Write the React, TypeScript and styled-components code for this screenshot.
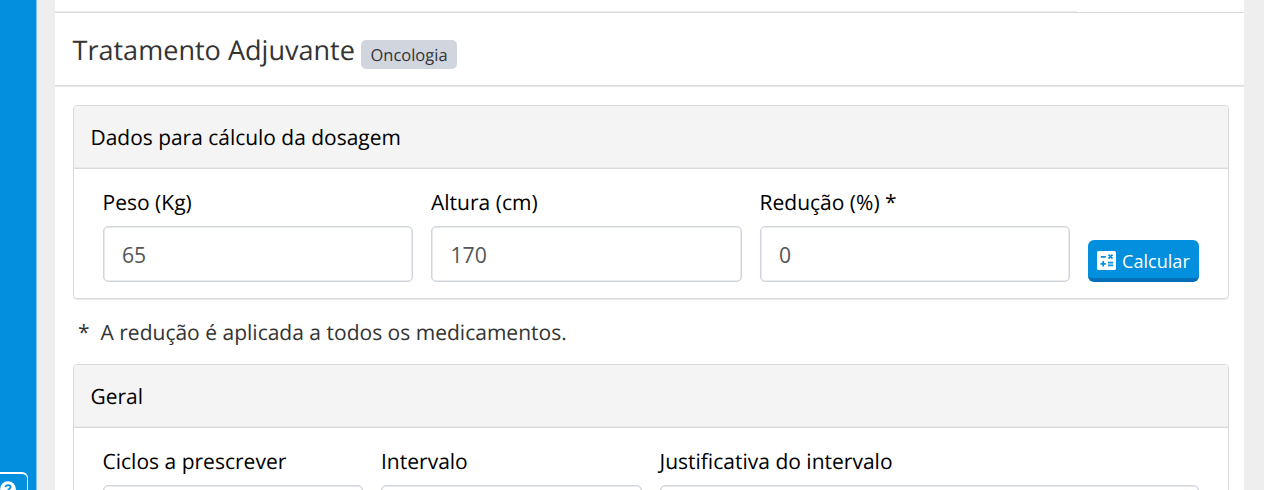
import React from "react";
import styled, { createGlobalStyle } from "styled-components";

const GlobalStyle = createGlobalStyle`
  * { box-sizing: border-box; }
  html, body { margin: 0; height: 490px; overflow: hidden; }
  body {
    background: #eeeeee;
    font-family: "Open Sans", "Noto Sans", sans-serif;
    font-size: 21.02px;
    font-weight: 370;
    color: #000;
    text-rendering: geometricPrecision;
    -webkit-font-smoothing: antialiased;
  }
`;

const Page = styled.div`
  display: flex;
  width: 1264px;
  height: 490px;
  overflow: hidden;
`;

const Sidebar = styled.aside`
  display: flex;
  align-items: flex-end;
  flex: none;
  width: 37px;
  background: #028fde;
  border-right: 1px solid #80c5ec;
`;

const HelpButton = styled.button`
  display: flex;
  justify-content: flex-start;
  width: 27.5px;
  height: 18px;
  padding: 7px 0 0;
  overflow: hidden;
  background: transparent;
  border: 1.5px solid #fff;
  border-width: 2px 1px 0 0;
  border-radius: 0 6px 0 0;
`;

const HelpIcon = styled.svg`
  display: block;
  flex: none;
  width: 16px;
  height: 16px;
`;

const Content = styled.main`
  flex: none;
  width: 1189px;
  height: 490px;
  margin-left: 18px;
  background: #fff;
  overflow: hidden;
`;

const PreviousSection = styled.div`
  height: 13px;
  padding-top: 11px;
  border-bottom: 1px solid #dadada;
`;

const PreviousEdge = styled.div`
  width: 1022px;
  height: 1px;
  background: #eeeeee;
`;

const TitleBar = styled.header`
  display: flex;
  align-items: flex-start;
  height: 73px;
  padding-left: 17.5px;
  border-bottom: 1px solid #dadada;
  box-shadow: 0 1px #eaeaea;
`;

const Title = styled.h1`
  margin: 17px 0 0;
  font-size: 27.05px;
  font-weight: 370;
  line-height: 39px;
  color: #343434;
  white-space: nowrap;
`;

const Badge = styled.span`
  height: 29px;
  margin: 27px 0 0 6px;
  padding: 0 9.5px;
  border-radius: 5px;
  background: #d1d5de;
  color: #343434;
  font-size: 16.5px;
  line-height: 30px;
`;

const Card = styled.section`
  width: 1156px;
  height: 194px;
  margin-left: 18px;
  border: 1px solid #dadada;
  border-radius: 4px;
  box-shadow: 0 1px #eaeaea;
  overflow: hidden;
`;

const CardHeader = styled.h2`
  height: 63px;
  margin: 0;
  padding-left: 16.5px;
  border-bottom: 1px solid #dadada;
  background: #f4f4f4;
  box-shadow: inset 0 -1px #eaeaea;
  font-size: 20.95px;
  font-weight: 370;
  line-height: 64px;
`;

const FieldRow = styled.div`
  display: flex;
  align-items: flex-end;
  gap: 18px;
  height: 113px;
  padding: 0 28.5px;
`;

const Field = styled.label<{ $width: number }>`
  display: flex;
  flex-direction: column;
  flex: none;
  width: ${(p) => p.$width}px;
`;

const FieldLabel = styled.span`
  height: 37px;
  line-height: 28px;
  white-space: nowrap;
`;

const Input = styled.input`
  width: 100%;
  height: 56px;
  padding: 0 18.5px;
  border: 1px solid #d1d5de;
  box-shadow: inset 0 0 0 0.5px #d1d5de;
  border-radius: 5px;
  background: #fff;
  color: #555;
  font: inherit;
  font-size: 21.2px;
  outline: none;
`;

const CalculateButton = styled.button`
  display: flex;
  align-items: center;
  gap: 6px;
  flex: none;
  width: 111px;
  height: 42px;
  margin-bottom: 0.4px;
  padding: 0 0 0 9px;
  border: 0;
  border-bottom: 4px solid #0270b8;
  border-radius: 6px;
  background: #028fde;
  color: #fff;
  font: inherit;
  font-size: 18.1px;
`;

const CalculatorIcon = styled.svg`
  display: block;
  flex: none;
  width: 19px;
  height: 19px;
  margin-top: 4px;
`;

const ButtonText = styled.span`
  padding-top: 4px;
`;

const Note = styled.p`
  height: 65px;
  margin: 0;
  padding-left: 23px;
  color: #343434;
  line-height: 68px;
  white-space: pre;
`;

const Gap = styled.div`
  height: 19px;
`;

export default function App() {
  return (
    <Page>
      <GlobalStyle />
      <Sidebar>
        <HelpButton aria-label="Ajuda">
          <HelpIcon viewBox="0 0 16 16">
            <circle cx="8" cy="8" r="7.8" fill="#fff" />
            <path d="M5.4 6.2Q5.8 4.1 8.1 4.1Q10.6 4.2 10.6 6Q10.6 7 9.4 7.7Q8.1 8.4 8.1 9.4" fill="none" stroke="#028fde" strokeWidth="1.8" />
            <circle cx="8.1" cy="11.8" r="1.1" fill="#028fde" />
          </HelpIcon>
        </HelpButton>
      </Sidebar>
      <Content>
        <PreviousSection>
          <PreviousEdge />
        </PreviousSection>
        <TitleBar>
          <Title>Tratamento Adjuvante</Title>
          <Badge>Oncologia</Badge>
        </TitleBar>
        <Gap />
        <Card>
          <CardHeader>Dados para cálculo da dosagem</CardHeader>
          <FieldRow>
            <Field $width={310.5}>
              <FieldLabel>Peso (Kg)</FieldLabel>
              <Input defaultValue="65" />
            </Field>
            <Field $width={310.5}>
              <FieldLabel>Altura (cm)</FieldLabel>
              <Input defaultValue="170" />
            </Field>
            <Field $width={310.5}>
              <FieldLabel>Redução (%) *</FieldLabel>
              <Input defaultValue="0" />
            </Field>
            <CalculateButton>
              <CalculatorIcon viewBox="0 0 19 19">
                <rect width="19" height="19" rx="1.6" fill="#fff" />
                <path
                  d="M3.8 5.8h5M11.5 3.7l4 4M15.5 3.7l-4 4M3.5 12.8h5.4M6.2 10.1v5.4M11 11.6h5.2M11 14.3h5.2"
                  fill="none"
                  stroke="#028fde"
                  strokeWidth="1.7"
                />
              </CalculatorIcon>
              <ButtonText>Calcular</ButtonText>
            </CalculateButton>
          </FieldRow>
        </Card>
        <Note>{"*  A redução é aplicada a todos os medicamentos."}</Note>
        <Card>
          <CardHeader>Geral</CardHeader>
          <FieldRow>
            <Field $width={260.5}>
              <FieldLabel>Ciclos a prescrever</FieldLabel>
              <Input />
            </Field>
            <Field $width={260.5}>
              <FieldLabel>Intervalo</FieldLabel>
              <Input />
            </Field>
            <Field $width={539.5}>
              <FieldLabel>Justificativa do intervalo</FieldLabel>
              <Input />
            </Field>
          </FieldRow>
        </Card>
      </Content>
    </Page>
  );
}
